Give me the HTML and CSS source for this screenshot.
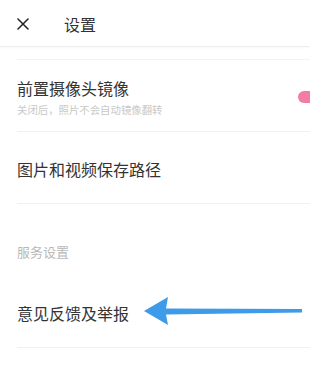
FILE: index.html
```html
<!DOCTYPE html>
<html lang="zh-CN">
<head>
<meta charset="utf-8">
<link rel="stylesheet" href="styles.css">
</head>
<body>
<div class="page">
  <header class="topbar">
    <svg class="close" viewBox="0 0 12 12" width="12" height="12"><path d="M1 1 L11 11 M11 1 L1 11" stroke="#222" stroke-width="1.5" fill="none" stroke-linecap="round"/></svg>
    <span class="topbar-title">设置</span>
  </header>
  <div class="list">
    <div class="item item-two">
      <div class="item-text">
        <div class="item-title">前置摄像头镜像</div>
        <div class="item-sub">关闭后，照片不会自动镜像翻转</div>
      </div>
      <div class="toggle"><span class="knob"></span></div>
    </div>
    <div class="item">
      <div class="item-title">图片和视频保存路径</div>
    </div>
    <div class="section">服务设置</div>
    <div class="item">
      <div class="item-title">意见反馈及举报</div>
    </div>
  </div>
  <svg class="arrow" viewBox="0 0 310 370" width="310" height="370">
    <polygon points="144,311 168,297 166,308.5 302,309 302,312.5 166,314.5 168,325" fill="#3d9bea"/>
  </svg>
</div>
</body>
</html>
```
FILE: styles.css
```css
html, body {
  margin: 0;
  padding: 0;
  background: #fff;
  overflow: hidden;
}
.page {
  position: relative;
  width: 310px;
  height: 370px;
  overflow: hidden;
  font-family: "Noto Sans CJK SC", "Noto Sans", sans-serif;
  color: #333;
}
.topbar {
  height: 47px;
  display: flex;
  align-items: center;
  padding: 2px 0 0 17px;
  box-sizing: border-box;
  border-bottom: 1px solid #ededed;
  box-shadow: 0 1px 2px rgba(0,0,0,0.03);
}
.close {
  display: block;
  flex: none;
}
.topbar-title {
  margin-left: 35px;
  font-size: 16px;
  line-height: 22px;
  color: #333;
}
.list {
  margin-top: 12px;
  border-top: 1px solid #f3f3f3;
  margin-left: 17px;
}
.item {
  display: flex;
  align-items: center;
  height: 72px;
  border-bottom: 1px solid #f1f1f1;
  box-sizing: border-box;
  padding-top: 3px;
}
.item-two {
  padding-top: 2px;
}
.item-text {
  flex: 1;
}
.item-title {
  font-size: 16px;
  line-height: 22px;
  color: #333;
}
.item-sub {
  margin-top: 4px;
  font-size: 10.4px;
  line-height: 14px;
  color: #c8c8c8;
}
.toggle {
  flex: none;
  width: 34px;
  height: 12px;
  border-radius: 6px;
  background: #f27ca6;
  margin-right: -22px;
  position: relative;
}
.knob {
  position: absolute;
  right: -2px;
  top: -5px;
  width: 22px;
  height: 22px;
  border-radius: 50%;
  background: #fff;
  box-shadow: 0 1px 3px rgba(0,0,0,0.15);
}
.section {
  padding: 39px 0 15px;
  font-size: 13px;
  line-height: 18px;
  color: #b8b8b8;
}
.arrow {
  position: absolute;
  left: 0;
  top: 0;
  pointer-events: none;
}
```
